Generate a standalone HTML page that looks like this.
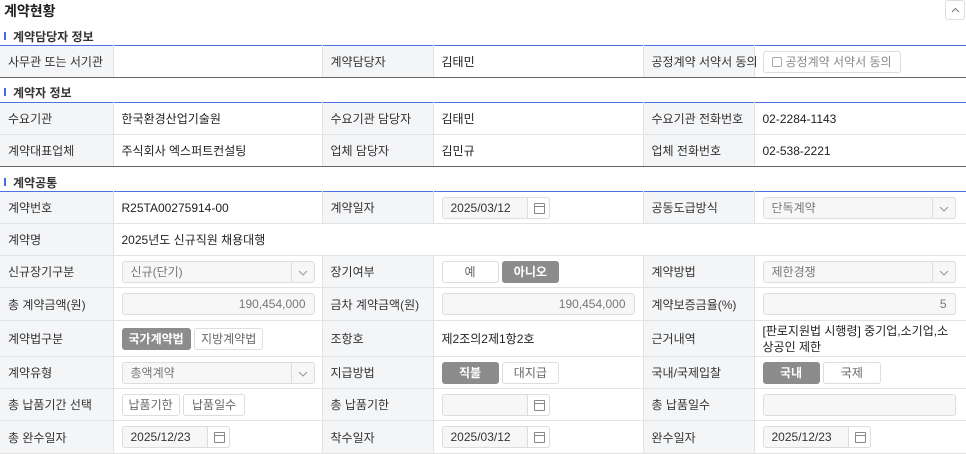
<!DOCTYPE html>
<html><head><meta charset="utf-8"><style>
*{box-sizing:border-box;margin:0;padding:0}
body{width:966px;height:453px;overflow:hidden;background:#fff;font-family:"Liberation Sans","Noto Sans CJK KR",sans-serif;font-size:12px;color:#222;position:relative}
.title{position:absolute;left:4px;top:1px;font-size:14px;font-weight:bold;color:#222}
.coll{position:absolute;left:945px;top:0;width:20px;height:20px;border:1px solid #ddd;border-radius:3px;background:#fff}
.coll svg{position:absolute;left:5px;top:6px}
.sec{position:absolute;left:4px;font-size:12px;font-weight:bold;color:#333;padding-left:9px}
.sec:before{content:"";position:absolute;left:0;top:4px;width:2px;height:8px;background:#3f6fe0}
table{position:absolute;left:0;width:966px;border-collapse:collapse;table-layout:fixed;border-top:1px solid #4a74e0}
td{border-bottom:1px solid #e2e2e2;padding:0 8px;vertical-align:middle;white-space:nowrap}
td.l{background:#f4f5f7;border-right:1px solid #e2e2e2;border-left:1px solid #e2e2e2;color:#333}
td.l:first-child{border-left:none}
tr:last-child td{border-bottom:1px solid #666}
table.last tr:last-child td{border-bottom:1px solid #e2e2e2}
.in{display:inline-block;height:22px;border:1px solid #ddd;border-radius:3px;background:#f7f7f7;color:#777;line-height:20px;padding:0 8px;vertical-align:middle;position:relative}
.r{text-align:right}
.sel:after{content:"";position:absolute;right:0;top:0;width:22px;height:20px;border-left:1px solid #ddd}
.sel svg{position:absolute;right:6px;top:8px}
.dt{width:108px;padding:0;color:#333;background:#f7f7f7}
.dt span{padding-left:8px}
.dt i{position:absolute;right:0;top:0;width:22px;height:20px;border-left:1px solid #ddd;background:#fff;border-radius:0 3px 3px 0}
.dt i:before{content:"";position:absolute;left:6px;top:5px;width:9px;height:9px;border:1px solid #888;border-radius:1px}
.dt i:after{content:"";position:absolute;left:6px;top:8px;width:10px;height:1px;background:#888}
.b{display:inline-block;height:22px;line-height:20px;border:1px solid #ddd;border-radius:3px;padding:0 9px;color:#666;background:#fff;vertical-align:middle;text-align:center}
.b.on{background:#8c8c8c;border-color:#8c8c8c;color:#fff;font-weight:bold}
</style></head><body>
<div class="title">계약현황</div>
<div class="coll"><svg width="9" height="6"><path d="M1 5L4.5 1.5L8 5" stroke="#777" fill="none"/></svg></div>

<div class="sec" style="top:28px">계약담당자 정보</div>
<table style="top:45px">
<colgroup><col width="113"><col width="209"><col width="111"><col width="210"><col width="111"><col width="212"></colgroup>
<tr style="height:32px"><td class="l">사무관 또는 서기관</td><td></td><td class="l">계약담당자</td><td>김태민</td><td class="l">공정계약 서약서 동의</td><td><span class="b" style="padding:0 8px;color:#888"><span style="display:inline-block;width:10px;height:10px;border:1px solid #aaa;border-radius:2px;vertical-align:-1px;margin-right:4px"></span>공정계약 서약서 동의</span></td></tr>
</table>

<div class="sec" style="top:84px">계약자 정보</div>
<table style="top:102px">
<colgroup><col width="113"><col width="209"><col width="111"><col width="210"><col width="111"><col width="212"></colgroup>
<tr style="height:32px"><td class="l">수요기관</td><td>한국환경산업기술원</td><td class="l">수요기관 담당자</td><td>김태민</td><td class="l">수요기관 전화번호</td><td>02-2284-1143</td></tr>
<tr style="height:32px"><td class="l">계약대표업체</td><td>주식회사 엑스퍼트컨설팅</td><td class="l">업체 담당자</td><td>김민규</td><td class="l">업체 전화번호</td><td>02-538-2221</td></tr>
</table>

<div class="sec" style="top:174px">계약공통</div>
<table class="last" style="top:191px">
<colgroup><col width="113"><col width="209"><col width="111"><col width="210"><col width="111"><col width="212"></colgroup>
<tr style="height:32px"><td class="l">계약번호</td><td>R25TA00275914-00</td><td class="l">계약일자</td><td><span class="in dt"><span>2025/03/12</span><i></i></span></td><td class="l">공동도급방식</td><td><span class="in sel" style="width:193px">단독계약<svg width="10" height="6"><path d="M1 1L5 5L9 1" stroke="#999" fill="none"/></svg></span></td></tr>
<tr style="height:32px"><td class="l">계약명</td><td colspan="5">2025년도 신규직원 채용대행</td></tr>
<tr style="height:32px"><td class="l">신규장기구분</td><td><span class="in sel" style="width:193px">신규(단기)<svg width="10" height="6"><path d="M1 1L5 5L9 1" stroke="#999" fill="none"/></svg></span></td><td class="l">장기여부</td><td><span class="b" style="width:57px">예</span> <span class="b on" style="width:57px">아니오</span></td><td class="l">계약방법</td><td><span class="in sel" style="width:193px">제한경쟁<svg width="10" height="6"><path d="M1 1L5 5L9 1" stroke="#999" fill="none"/></svg></span></td></tr>
<tr style="height:33px"><td class="l">총 계약금액(원)</td><td><span class="in r" style="width:193px">190,454,000</span></td><td class="l">금차 계약금액(원)</td><td><span class="in r" style="width:193px">190,454,000</span></td><td class="l">계약보증금율(%)</td><td><span class="in r" style="width:193px">5</span></td></tr>
<tr style="height:36px"><td class="l">계약법구분</td><td><span class="b on" style="padding:0 6px">국가계약법</span> <span class="b" style="padding:0 6px">지방계약법</span></td><td class="l">조항호</td><td>제2조의2제1항2호</td><td class="l">근거내역</td><td style="white-space:normal;line-height:16px">[판로지원법 시행령] 중기업,소기업,소상공인 제한</td></tr>
<tr style="height:32px"><td class="l">계약유형</td><td><span class="in sel" style="width:193px">총액계약<svg width="10" height="6"><path d="M1 1L5 5L9 1" stroke="#999" fill="none"/></svg></span></td><td class="l">지급방법</td><td><span class="b on" style="width:57px">직불</span> <span class="b" style="width:57px">대지급</span></td><td class="l">국내/국제입찰</td><td><span class="b on" style="width:57px">국내</span> <span class="b" style="width:58px">국제</span></td></tr>
<tr style="height:32px"><td class="l">총 납품기간 선택</td><td><span class="b" style="padding:0 6px">납품기한</span> <span class="b" style="padding:0 8px">납품일수</span></td><td class="l">총 납품기한</td><td><span class="in dt"><span></span><i></i></span></td><td class="l">총 납품일수</td><td><span class="in" style="width:193px"></span></td></tr>
<tr style="height:33px"><td class="l">총 완수일자</td><td><span class="in dt"><span>2025/12/23</span><i></i></span></td><td class="l">착수일자</td><td><span class="in dt"><span>2025/03/12</span><i></i></span></td><td class="l">완수일자</td><td><span class="in dt"><span>2025/12/23</span><i></i></span></td></tr>
</table>
</body></html>
